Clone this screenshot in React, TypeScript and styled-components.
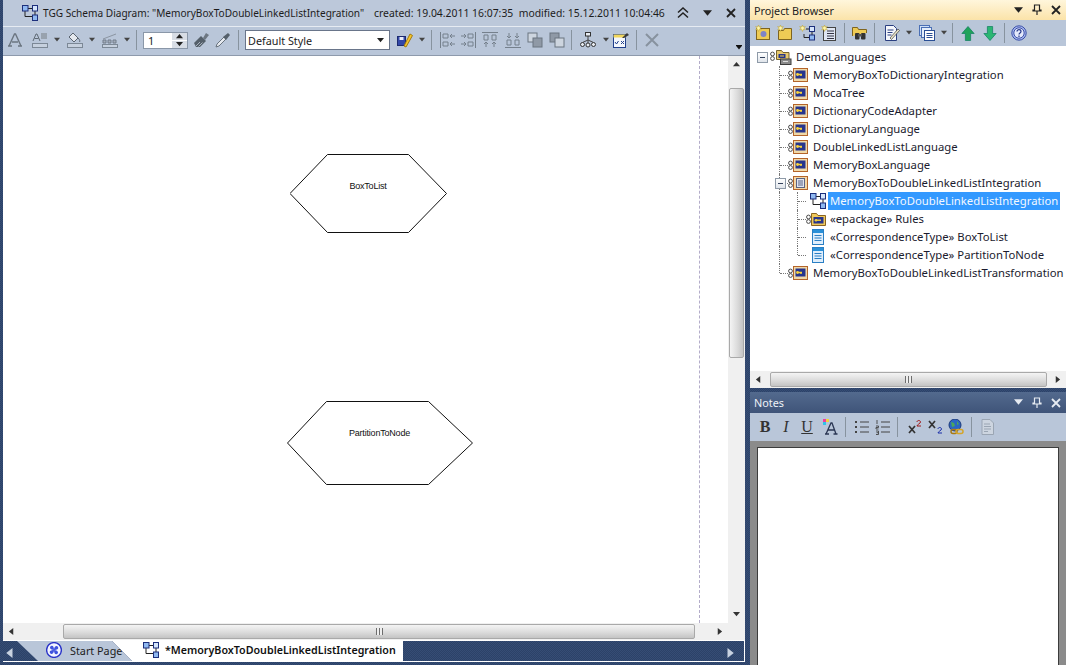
import React from "react";
import styled, { createGlobalStyle } from "styled-components";

const GlobalStyle = createGlobalStyle`
  html, body {
    margin: 0;
    padding: 0;
    background: #2f466d;
    overflow: hidden;
  }
  * { box-sizing: border-box; }
`;

const uiFont = `"Noto Sans", "DejaVu Sans", sans-serif`;
const navyDither = `repeating-conic-gradient(#2c4268 0 25%, #364d75 0 50%) 0 0 / 2px 2px`;

const Shell = styled.div`
  display: flex;
  gap: 4px;
  width: 1066px;
  height: 665px;
  background: ${navyDither};
  font-family: ${uiFont};
  font-size: 11.3px;
  color: #1c1c1c;
`;

const LeftPane = styled.div`
  width: 746px;
  height: 100%;
  padding: 0 1px 3px 3px;
  display: flex;
  flex-direction: column;
`;

const TitleBar = styled.div`
  height: 27px;
  flex: none;
  display: flex;
  align-items: center;
  padding-left: 19px;
  background: #bcc8da;
  border-bottom: 1px solid #e6ebf2;
  white-space: nowrap;
  font-size: 10.1px;
`;

const TitleIcon = styled.span`
  display: flex;
  flex: none;
  margin-right: 5px;
`;

const TitleText = styled.span`
  width: 331px;
  flex: none;
`;

const TitleMeta = styled.span`
  width: 303px;
  flex: none;
  font-size: 10.4px;
`;

const TitleButtons = styled.div`
  display: flex;
  align-items: center;
  gap: 14px;
`;

const Toolbar = styled.div`
  flex: none;
  display: flex;
  align-items: center;
  background: #b9c6d9;
  position: relative;
`;

const MainToolbar = styled(Toolbar)`
  height: 29px;
  padding: 0 0 2px 4px;
  border-bottom: 1px solid #8e9aac;
`;

const Overflow = styled.span`
  position: absolute;
  right: 3px;
  bottom: 4px;
  width: 6px;
  height: 6px;
  border-top: 1px solid #111;
  display: flex;
  align-items: flex-end;
`;

const Sep = styled.span<{ $l?: number; $r?: number }>`
  width: 1px;
  height: 20px;
  flex: none;
  background: #87939f;
  margin: 0 ${({ $r }) => ($r ?? 6) - 1}px 0 ${({ $l }) => $l ?? 6}px;
`;

const Tool = styled.span<{ $w?: number; $mr?: number }>`
  width: ${({ $w }) => $w ?? 16}px;
  height: 18px;
  flex: none;
  display: flex;
  align-items: center;
  justify-content: center;
  margin-right: ${({ $mr }) => $mr ?? 0}px;
`;

const Spin = styled.div`
  width: 45px;
  height: 17px;
  flex: none;
  margin-right: 5px;
  background: #fff;
  border: 1px solid #8a97a8;
  display: flex;
  align-items: center;
  justify-content: space-between;
  padding-left: 4px;
  font-size: 11px;
`;

const SpinBtns = styled.div`
  width: 15px;
  height: 100%;
  display: flex;
  flex-direction: column;
  gap: 1px;
  background: #fff;
`;

const SpinBtn = styled.span`
  flex: 1;
  background: #d8dde5;
  display: flex;
  align-items: center;
  justify-content: center;
`;

const Select = styled.div`
  width: 145px;
  height: 20px;
  flex: none;
  margin-right: 7px;
  background: #fff;
  border: 1px solid #69758a;
  display: flex;
  align-items: center;
  justify-content: space-between;
  padding: 0 5px 0 2px;
  font-size: 10.8px;
`;

const CanvasRow = styled.div`
  flex: 1;
  min-height: 0;
  display: flex;
  background: #fff;
`;

const Diagram = styled.div`
  flex: 1;
  position: relative;
  overflow: hidden;
  background: #fff;
`;

const PageBreak = styled.div`
  position: absolute;
  top: 0;
  bottom: 0;
  left: 696px;
  border-left: 1px dashed #b3acc9;
`;

const NodeBox = styled.div<{ $x: number; $y: number; $w: number; $h: number }>`
  position: absolute;
  left: ${({ $x }) => $x}px;
  top: ${({ $y }) => $y}px;
  width: ${({ $w }) => $w}px;
  height: ${({ $h }) => $h}px;
  display: flex;
  align-items: center;
  justify-content: center;
`;

const NodeShape = styled.svg`
  position: absolute;
  inset: 0;
  width: 100%;
  height: 100%;
`;

const NodeLabel = styled.span<{ $lift: number }>`
  position: relative;
  margin-bottom: ${({ $lift }) => $lift}px;
  margin-right: 1px;
  font-family: "Liberation Sans", Arial, sans-serif;
  font-size: 9px;
  letter-spacing: -0.2px;
  color: #111;
`;

const VScroll = styled.div`
  width: 17px;
  flex: none;
  display: flex;
  flex-direction: column;
  background: #f0f0f0;
`;

const ScrollBtn = styled.div`
  flex: none;
  width: 17px;
  height: 17px;
  display: flex;
  align-items: center;
  justify-content: center;
`;

const VThumb = styled.div`
  width: 15px;
  height: 270px;
  margin: 15px 1px 0;
  border: 1px solid #a9a9a9;
  border-radius: 2px;
  background: linear-gradient(90deg, #f4f4f4, #dcdcdc 55%, #c4c4c4);
`;

const VTrack = styled.div`
  flex: 1;
`;

const HScroll = styled.div`
  height: 17px;
  flex: none;
  display: flex;
  align-items: center;
  background: #f0f0f0;
`;

const HThumb = styled.div<{ $w: number; $ml: number }>`
  width: ${({ $w }) => $w}px;
  height: 15px;
  margin-left: ${({ $ml }) => $ml}px;
  border: 1px solid #a9a9a9;
  border-radius: 2px;
  background: linear-gradient(180deg, #f4f4f4, #dcdcdc 55%, #c4c4c4);
  display: flex;
  align-items: center;
  justify-content: center;
`;

const Grip = styled.span`
  width: 7px;
  height: 7px;
  background: repeating-linear-gradient(90deg, #6d6d6d 0 1px, #eee 1px 3px);
`;

const Spacer = styled.div`
  flex: 1;
`;

const TabStrip = styled.div`
  height: 22px;
  flex: none;
  position: relative;
  display: flex;
  align-items: stretch;
  padding-left: 14px;
  border-top: 1px solid #fff;
  border-right: 1px solid #fff;
  border-bottom: 1px solid #fff;
  background: ${navyDither};
`;

const StartTab = styled.div`
  width: 115px;
  flex: none;
  position: relative;
  z-index: 1;
  clip-path: polygon(0 0, 95px 0, 100% 100%, 21px 100%);
  background: #b9c6d9;
  display: flex;
  align-items: center;
  padding: 0 0 2px 29px;
  gap: 8px;
  font-size: 10.8px;
`;

const ActiveTab = styled.div`
  width: 291px;
  flex: none;
  margin-left: -20px;
  clip-path: polygon(0 0, 100% 0, 100% 100%, 20px 100%);
  background: #fff;
  display: flex;
  align-items: center;
  padding: 0 0 2px 31px;
  gap: 6px;
  font-size: 10.7px;
  font-weight: 600;
  color: #111;
  white-space: nowrap;
`;

const TabIcon = styled.span`
  display: flex;
  flex: none;
`;

const TabArrow = styled.span<{ $left?: boolean }>`
  position: absolute;
  top: 5px;
  ${({ $left }) => ($left ? "left: 2px;" : "right: 9px;")}
`;

const RightPane = styled.div`
  width: 316px;
  height: 100%;
  display: flex;
  flex-direction: column;
`;

const BrowserTitle = styled.div`
  height: 20px;
  flex: none;
  display: flex;
  align-items: center;
  padding: 0 5px 0 4px;
  background: linear-gradient(180deg, #fff6dc, #fbe3a9);
  color: #222;
  font-size: 10.8px;
`;

const PaneTitleText = styled.span`
  flex: 1;
`;

const PaneButtons = styled.div`
  display: flex;
  align-items: center;
  gap: 9px;
`;

const NotesTitle = styled(BrowserTitle)`
  height: 21px;
  margin-top: 4px;
  background: linear-gradient(180deg, #536a8e, #3f5479);
  color: #eef2f7;
`;

const BrowserBar = styled(Toolbar)`
  height: 26px;
  padding-left: 5px;
`;

const TreeArea = styled.div`
  flex: none;
  height: 325px;
  background: #fff;
  padding-top: 2px;
  overflow: hidden;
`;

const Row = styled.div`
  height: 18px;
  padding-left: 2px;
  display: flex;
  align-items: center;
  white-space: nowrap;
  color: #1b1b2e;
`;

const Guide = styled.span<{ $line: "none" | "through" | "branch" | "end" }>`
  position: relative;
  width: 18px;
  height: 18px;
  flex: none;
  &::before {
    content: "";
    position: absolute;
    left: 9px;
    top: 0;
    border-left: 1px dotted #777;
    display: ${({ $line }) => ($line === "none" ? "none" : "block")};
    height: ${({ $line }) => ($line === "end" ? "9px" : "18px")};
  }
  &::after {
    content: "";
    position: absolute;
    left: 10px;
    top: 9px;
    width: 8px;
    border-top: 1px dotted #777;
    display: ${({ $line }) => ($line === "branch" || $line === "end" ? "block" : "none")};
  }
`;

const Expander = styled.span`
  position: absolute;
  left: 5px;
  top: 4px;
  width: 11px;
  height: 11px;
  border: 1px solid #8e9aa8;
  background: linear-gradient(180deg, #fff, #dfe4ea);
  z-index: 1;
  &::after {
    content: "";
    position: absolute;
    left: 2px;
    top: 4px;
    width: 5px;
    height: 1px;
    background: #33415c;
  }
`;

const RowIcon = styled.span<{ $w: number; $mr: number }>`
  display: flex;
  justify-content: flex-end;
  width: ${({ $w }) => $w}px;
  margin-right: ${({ $mr }) => $mr}px;
  flex: none;
`;

const RowLabel = styled.span<{ $selected?: boolean }>`
  padding: 0 2px;
  height: 18px;
  line-height: 18px;
  ${({ $selected }) => $selected && "background: #3399ff; color: #f2f8ff;"}
`;

const NotesBar = styled(Toolbar)`
  height: 28px;
  padding-left: 5px;
`;

const FormatLetter = styled.span<{ $i?: boolean; $u?: boolean; $b?: boolean; $mr?: number }>`
  width: 20px;
  flex: none;
  margin-right: ${({ $mr }) => $mr ?? 1}px;
  text-align: center;
  font-family: "Liberation Serif", serif;
  font-size: 16px;
  color: #333;
  font-weight: ${({ $b }) => ($b ? 700 : 400)};
  font-style: ${({ $i }) => ($i ? "italic" : "normal")};
  text-decoration: ${({ $u }) => ($u ? "underline" : "none")};
`;

const NotesBody = styled.div`
  flex: 1;
  min-height: 0;
  background: #8b8b8b;
  padding: 6px 7px 0;
`;

const NotesEditor = styled.div`
  height: 100%;
  background: #fff;
  border: 1px solid #3c3c3c;
  border-bottom: 0;
`;

const Tri = ({ dir = "down", c = "#222", s = 7 }: { dir?: "down" | "up" | "left" | "right"; c?: string; s?: number }) => {
  const pts = { down: "0,1 8,1 4,6", up: "0,6 8,6 4,1", left: "6,0 6,8 1,4", right: "2,0 2,8 7,4" }[dir];
  return (
    <svg width={s} height={s} viewBox="0 0 8 8">
      <polygon points={pts} fill={c} />
    </svg>
  );
};

const Caret = ({ mr }: { mr?: number }) => (
  <Tool $w={9} $mr={mr}>
    <Tri c="#444" s={6} />
  </Tool>
);

const DiagramIcon = () => (
  <svg width="16" height="16" viewBox="0 0 16 16">
    <path d="M6 3.500h4M13 6v4M3 6v5.500h7" fill="none" stroke="#222" />
    <rect x="0.500" y="0.500" width="5.500" height="5.500" fill="#8fb8f0" stroke="#1c2f7c" />
    <rect x="10.500" y="0.500" width="5" height="5.500" fill="#d5e5fb" stroke="#1c2f7c" />
    <rect x="10.500" y="10" width="5" height="5.500" fill="#8fb8f0" stroke="#1c2f7c" />
  </svg>
);

const Chain = () => (
  <>
    <circle cx="2.500" cy="6" r="1.900" fill="#fff" stroke="#4a4a4a" />
    <circle cx="2.500" cy="10.500" r="1.900" fill="#fff" stroke="#4a4a4a" />
  </>
);

const PackageIcon = () => (
  <svg width="20" height="16" viewBox="0 0 20 16">
    <Chain />
    <rect x="5.500" y="1.500" width="14" height="13" fill="#f0d9a8" stroke="#b4642a" />
    <rect x="7.500" y="3.500" width="10" height="8" fill="#27358c" />
    <path d="M9 7.500h5M13 7.500v1.500" stroke="#f6d33c" strokeWidth="1.400" fill="none" />
    <circle cx="9.500" cy="7.500" r="1.400" fill="#f6d33c" />
  </svg>
);

const DocPackageIcon = () => (
  <svg width="20" height="16" viewBox="0 0 20 16">
    <Chain />
    <rect x="5.500" y="1.500" width="14" height="13" fill="#f3d7a6" stroke="#b4642a" />
    <rect x="8.500" y="3.500" width="8" height="9" fill="#dfe4f0" stroke="#5a6282" />
    <path d="M10 6h5M10 8h5M10 10h5" stroke="#5a6282" />
  </svg>
);

const FolderPackageIcon = () => (
  <svg width="20" height="16" viewBox="0 0 20 16">
    <Chain />
    <path d="M5.500 14.500v-12h5l1.500 2h7.500v10z" fill="#efc95c" stroke="#8a6420" />
    <rect x="7.500" y="6" width="10" height="6.500" fill="#27358c" />
    <path d="M10 9.200h5" stroke="#f6d33c" strokeWidth="1.400" />
    <circle cx="10" cy="9.200" r="1.300" fill="#f6d33c" />
  </svg>
);

const RootIcon = () => (
  <svg width="22" height="18" viewBox="0 0 22 18">
    <Chain />
    <path d="M6.500 11.500v-9h5l1.500 2h6v7z" fill="#e7c96d" stroke="#76632d" />
    <rect x="8.500" y="6" width="7" height="4" fill="#27358c" />
    <path d="M10 8h4" stroke="#f6d33c" />
    <rect x="10.500" y="11" width="10.500" height="5.500" fill="#8b8b8b" stroke="#3d3d3d" />
    <path d="M13 13.500h5" stroke="#ddd" />
  </svg>
);

const ClassIcon = () => (
  <svg width="12" height="16" viewBox="0 0 12 16">
    <rect x="0.500" y="0.500" width="11" height="15" fill="#dfeefc" stroke="#2a7fc4" />
    <rect x="1" y="1" width="10" height="3" fill="#2a90d8" />
    <path d="M2.500 6.500h7M2.500 9h7M2.500 11.500h7" stroke="#2a7fc4" />
  </svg>
);

// Toolbar icons: all on a 16px grid, greyed ones use the same stroke colour
const GlyphA = () => (
  <svg width="16" height="16" viewBox="0 0 16 16">
    <path d="M2 14L7.500 2h1L14 14M1 14h4M11 14h4M5 10h6" fill="none" stroke="#6b7580" strokeWidth="1.400" />
  </svg>
);
const FontColor = () => (
  <svg width="16" height="16" viewBox="0 0 16 16">
    <path d="M1 9l3-7h1l3 7M2.500 6.500h4" fill="none" stroke="#5f6a75" />
    <rect x="9" y="1" width="6" height="6" fill="#98a2ae" />
    <rect x="0.500" y="11.500" width="15" height="4" fill="#c6d0de" stroke="#7c8896" />
  </svg>
);
const FillColor = () => (
  <svg width="16" height="16" viewBox="0 0 16 16">
    <path d="M2 5l4-4 5 5-4 4z" fill="#e4e8ee" stroke="#5a6470" />
    <path d="M11 6c2 2 2 3 1.500 4" stroke="#5a6470" fill="none" />
    <rect x="0.500" y="11.500" width="15" height="4" fill="#c6d0de" stroke="#7c8896" />
  </svg>
);
const LineColor = () => (
  <svg width="16" height="16" viewBox="0 0 16 16">
    <path d="M1 7l13-5" stroke="#8b95a2" />
    <path d="M1 8h3v3h-3zM6 8h3v3h-3zM11 8h3v3h-3z" fill="#a3adba" stroke="#727d8b" />
    <rect x="0.500" y="12.500" width="15" height="3" fill="#c6d0de" stroke="#7c8896" />
  </svg>
);
const Brush = () => (
  <svg width="16" height="16" viewBox="0 0 16 16">
    <path d="M10 6l3-5 3 2-4 5z" fill="#6d7782" />
    <path d="M1 11l7-7 5 5-6 6H3z" fill="#55606b" />
    <path d="M3 14l4-4M5.500 14.500l4-4" stroke="#aab4bf" />
  </svg>
);
const Dropper = () => (
  <svg width="16" height="16" viewBox="0 0 16 16">
    <path d="M1 15l1-3 7-7 2 2-7 7z" fill="#e6eaf0" stroke="#69737e" />
    <path d="M8 5l5-4 2 2-4 5z" fill="#55606b" />
  </svg>
);
const SavePen = () => (
  <svg width="16" height="16" viewBox="0 0 16 16">
    <rect x="0.500" y="4.500" width="8" height="9" fill="#3348a8" stroke="#1c2a70" />
    <rect x="2.500" y="5" width="4" height="3" fill="#e8ecf8" />
    <path d="M7 14L13 2l2.500 1.500L9 15z" fill="#f6c52a" stroke="#a17a10" />
  </svg>
);
const Align = ({ kind }: { kind: number }) => {
  const paths = [
    "M0.500 0v16M3 2h5v4h-5zM3 10h5v4h-5zM15 4h-5M12 2l-2 2 2 2M15 12h-5M12 10l-2 2 2 2",
    "M15.500 0v16M8 2h5v4h-5zM8 10h5v4h-5zM1 4h5M4 2l2 2-2 2M1 12h5M4 10l2 2-2 2",
    "M0 0.500h16M2 3h4v5h-4zM10 3h4v5h-4zM4 15v-5M2 12l2-2 2 2M12 15v-5M10 12l2-2 2 2",
    "M0 15.500h16M2 8h4v5h-4zM10 8h4v5h-4zM4 1v5M2 4l2 2 2-2M12 1v5M10 4l2 2 2-2",
  ][kind];
  return (
    <svg width="16" height="16" viewBox="0 0 16 16">
      <path d={paths} fill="none" stroke="#75808c" />
    </svg>
  );
};
const Stack = ({ front }: { front?: boolean }) => (
  <svg width="16" height="16" viewBox="0 0 16 16">
    <rect x="1" y="1" width="9" height="9" fill={front ? "#8f99a6" : "#cdd5df"} stroke="#6a7480" />
    <rect x="6" y="6" width="9" height="9" fill={front ? "#cdd5df" : "#8f99a6"} stroke="#6a7480" />
  </svg>
);
const LayoutTree = () => (
  <svg width="16" height="16" viewBox="0 0 16 16">
    <path d="M5.500 3h5M8 4v4M2.500 10.500L8 8l5.500 2.500M8 8v3" fill="none" stroke="#444" />
    <rect x="5.500" y="0.500" width="5" height="3.500" fill="#e8ecf2" stroke="#333" />
    <circle cx="2.500" cy="12.500" r="2" fill="#e8ecf2" stroke="#333" />
    <circle cx="8" cy="13" r="2" fill="#e8ecf2" stroke="#333" />
    <circle cx="13.500" cy="12.500" r="2" fill="#e8ecf2" stroke="#333" />
  </svg>
);
const CheckSheet = () => (
  <svg width="16" height="16" viewBox="0 0 16 16">
    <rect x="0.500" y="2.500" width="12" height="13" fill="#f4f7fc" stroke="#21408c" />
    <rect x="0.500" y="2.500" width="12" height="3" fill="#f1d65c" />
    <path d="M2 10l1.500 2 2-3M8 9l3 3M11 9l-3 3" stroke="#21408c" fill="none" />
    <path d="M9 6l5-5 2 2-5 3z" fill="#3a3a3a" />
  </svg>
);
const CrossGrey = () => (
  <svg width="16" height="16" viewBox="0 0 16 16">
    <path d="M2 2l12 12M14 2L2 14" stroke="#87929f" strokeWidth="2" />
  </svg>
);

const Sparkle = () => (
  <path d="M3.500 0l.8 2 2-.5-1.200 1.700 1.200 1.600-2-.4-.8 2-.8-2-2 .4 1.200-1.600L.7 1.500l2 .5z" fill="#fff6a8" stroke="#b89a2a" strokeWidth=".5" />
);
const NewPackage = () => (
  <svg width="16" height="16" viewBox="0 0 16 16">
    <rect x="1.500" y="3.500" width="13" height="11" fill="#eecb55" stroke="#7e6420" />
    <circle cx="8.500" cy="9" r="3" fill="#7f84c7" />
    <Sparkle />
  </svg>
);
const NewFolder = () => (
  <svg width="16" height="16" viewBox="0 0 16 16">
    <path d="M1.500 14.500v-9h5l1-2h7v11z" fill="#eecb55" stroke="#7e6420" />
    <Sparkle />
  </svg>
);
const NewDiagram = () => (
  <svg width="16" height="16" viewBox="0 0 16 16">
    <path d="M7 4h4M13 6v4M5 9v3.500h5" fill="none" stroke="#222" />
    <rect x="10.500" y="1.500" width="5" height="5" fill="#d5e5fb" stroke="#1c2f7c" />
    <rect x="10.500" y="10" width="5" height="5" fill="#8fb8f0" stroke="#1c2f7c" />
    <Sparkle />
  </svg>
);
const NewElement = () => (
  <svg width="16" height="16" viewBox="0 0 16 16">
    <rect x="2.500" y="2.500" width="12" height="13" fill="#dfe6f3" stroke="#444" />
    <path d="M6 6h7M6 8.500h7M6 11h7M6 13.500h7" stroke="#334" />
    <Sparkle />
  </svg>
);
const FindFolder = () => (
  <svg width="16" height="16" viewBox="0 0 16 16">
    <path d="M.5 11V2.500h5l1 2h8V8" fill="#eecb55" stroke="#7e6420" />
    <rect x="3" y="8" width="4.500" height="6.500" rx="1" fill="#333" />
    <rect x="9" y="8" width="4.500" height="6.500" rx="1" fill="#333" />
    <rect x="6" y="9" width="4" height="2.500" fill="#555" />
  </svg>
);
const EditDoc = () => (
  <svg width="16" height="16" viewBox="0 0 16 16">
    <path d="M1.500.5h8l3 3v12h-11z" fill="#f5f7fc" stroke="#2a3f80" />
    <path d="M3.500 5h6M3.500 7.500h5M3.500 10h4" stroke="#2a3f80" />
    <path d="M6 13l8-9 1.500 1.500-8 9z" fill="#e8e2c8" stroke="#444" strokeWidth=".7" />
  </svg>
);
const Windows = () => (
  <svg width="16" height="16" viewBox="0 0 16 16">
    <rect x="0.500" y="0.500" width="10" height="10" fill="#cfe0f7" stroke="#4a6fb5" />
    <rect x="2.500" y="2.500" width="10" height="10" fill="#e4eefb" stroke="#4a6fb5" />
    <rect x="5.500" y="5.500" width="10" height="10" fill="#fff" stroke="#2a4f95" />
    <path d="M7.500 8.500h6M7.500 10.500h6M7.500 12.500h6" stroke="#2a4f95" />
  </svg>
);
const Arrow = ({ down }: { down?: boolean }) => (
  <svg width="14" height="17" viewBox="0 0 16 18">
    <path
      d={down ? "M5 1h6v8h4l-7 8-7-8h4z" : "M8 1l7 8h-4v8H5V9H1z"}
      fill={down ? "#2bb673" : "#1fa35a"}
      stroke="#0f7d5e"
      strokeWidth=".8"
    />
  </svg>
);
const Help = () => (
  <svg width="16" height="16" viewBox="0 0 16 16">
    <circle cx="8" cy="8" r="7.200" fill="#a8b8ee" stroke="#3a4fa8" />
    <circle cx="8" cy="8" r="5.200" fill="#e4e9fb" stroke="#3a4fa8" />
    <path d="M6 6.500c0-2.500 4-2.500 4 0 0 1.500-2 1.500-2 3M8 10.500v1.500" fill="none" stroke="#26388a" strokeWidth="1.200" />
  </svg>
);
const Pin = ({ c }: { c: string }) => (
  <svg width="10" height="12" viewBox="0 0 10 12">
    <path d="M2.500 1h5v5h1.500v1H1V6h1.500zM5 7v4" fill="none" stroke={c} strokeWidth="1.200" />
  </svg>
);
const Close = ({ c }: { c: string }) => (
  <svg width="10" height="10" viewBox="0 0 10 10">
    <path d="M1 1l8 8M9 1L1 9" stroke={c} strokeWidth="1.800" />
  </svg>
);
const CollapseUp = () => (
  <svg width="12" height="12" viewBox="0 0 12 12">
    <path d="M1 5.500L6 1l5 4.500M1 10.500L6 6l5 4.500" fill="none" stroke="#222" strokeWidth="1.500" />
  </svg>
);
const ColorA = () => (
  <svg width="16" height="16" viewBox="0 0 16 16">
    <rect x="1" y="0" width="3" height="3" fill="#ef3fa0" />
    <rect x="4" y="0" width="3" height="3" fill="#f0d63a" />
    <rect x="1" y="3" width="3" height="3" fill="#2fc4e8" />
    <path d="M4 15L9 4h1l4 11M3 15h4M11.500 15h4M6 11h6" fill="none" stroke="#2b3754" strokeWidth="1.300" />
  </svg>
);
const BulletList = () => (
  <svg width="16" height="16" viewBox="0 0 16 16">
    <path d="M6 3h9M6 8h9M6 13h9" stroke="#444" />
    <path d="M1 2h2v2H1zM1 7h2v2H1zM1 12h2v2H1z" fill="#444" />
  </svg>
);
const NumberList = () => (
  <svg width="16" height="16" viewBox="0 0 16 16">
    <path d="M6 3h9M6 8h9M6 13h9" stroke="#444" />
    <path d="M2 1v4M1 7h2.500v1.500H1V10h2.500M1 12h2.500v3.500H1M1.500 13.700h2" fill="none" stroke="#444" strokeWidth=".9" />
  </svg>
);
const Sup = () => (
  <svg width="16" height="16" viewBox="0 0 16 16">
    <path d="M2 7l6 7M8 7l-6 7" stroke="#333" strokeWidth="1.700" />
    <path d="M10 3c0-2 3.500-2 3.500 0 0 1.500-3.500 2.500-3.500 4h4" fill="none" stroke="#a01818" />
  </svg>
);
const Sub = () => (
  <svg width="16" height="16" viewBox="0 0 16 16">
    <path d="M1 2l6 7M7 2L1 9" stroke="#333" strokeWidth="1.700" />
    <path d="M10 10c0-2 3.500-2 3.500 0 0 1.500-3.500 2.500-3.500 4h4" fill="none" stroke="#1a2ea8" />
  </svg>
);
const GlobeLink = () => (
  <svg width="16" height="16" viewBox="0 0 16 16">
    <circle cx="7" cy="6" r="6" fill="#2a66c4" stroke="#1c3a7c" />
    <path d="M3 3l3 1 1 3-3 1zM9 2l2 3-2 1z" fill="#4aa85a" />
    <rect x="3" y="10.500" width="6" height="4" rx="2" fill="none" stroke="#a87a14" strokeWidth="1.500" />
    <rect x="8" y="10.500" width="7" height="4" rx="2" fill="none" stroke="#d4a52a" strokeWidth="1.500" />
  </svg>
);
const GreyDoc = () => (
  <svg width="14" height="16" viewBox="0 0 14 16">
    <path d="M1 .5h8l3.500 3.500v11.500H1z" fill="#cdd5e0" stroke="#9aa5b3" />
    <path d="M3 5h6M3 7.500h7M3 10h7M3 12.500h4" stroke="#9aa5b3" />
  </svg>
);
const StartIcon = () => (
  <svg width="16" height="16" viewBox="0 0 16 16">
    <circle cx="8" cy="8" r="7.400" fill="#f2f4ff" stroke="#2a33c8" strokeWidth="1.400" />
    <path d="M8 8C4 8 3 5 5 4s3 1 3 4c0-4 3-5 4-3s-1 3-4 3c4 0 5 3 3 4s-3-1-3-4c0 4-3 5-4 3s1-3 4-3z" fill="#3f52de" />
  </svg>
);

type Line = "none" | "through" | "branch" | "end";

const treeRows: {
  guides: Line[];
  expand?: boolean;
  icon: React.ReactNode;
  w: number;
  mr: number;
  label: string;
  selected?: boolean;
}[] = [
  { guides: ["none"], expand: true, icon: <RootIcon />, w: 22, mr: 2, label: "DemoLanguages" },
  { guides: ["none", "branch"], icon: <PackageIcon />, w: 20, mr: 3, label: "MemoryBoxToDictionaryIntegration" },
  { guides: ["none", "branch"], icon: <PackageIcon />, w: 20, mr: 3, label: "MocaTree" },
  { guides: ["none", "branch"], icon: <PackageIcon />, w: 20, mr: 3, label: "DictionaryCodeAdapter" },
  { guides: ["none", "branch"], icon: <PackageIcon />, w: 20, mr: 3, label: "DictionaryLanguage" },
  { guides: ["none", "branch"], icon: <PackageIcon />, w: 20, mr: 3, label: "DoubleLinkedListLanguage" },
  { guides: ["none", "branch"], icon: <PackageIcon />, w: 20, mr: 3, label: "MemoryBoxLanguage" },
  { guides: ["none", "branch"], expand: true, icon: <DocPackageIcon />, w: 20, mr: 3, label: "MemoryBoxToDoubleLinkedListIntegration" },
  { guides: ["none", "through", "branch"], icon: <DiagramIcon />, w: 20, mr: 2, label: "MemoryBoxToDoubleLinkedListIntegration", selected: true },
  { guides: ["none", "through", "branch"], icon: <FolderPackageIcon />, w: 20, mr: 2, label: "«epackage» Rules" },
  { guides: ["none", "through", "branch"], icon: <ClassIcon />, w: 18, mr: 4, label: "«CorrespondenceType» BoxToList" },
  { guides: ["none", "through", "end"], icon: <ClassIcon />, w: 18, mr: 4, label: "«CorrespondenceType» PartitionToNode" },
  { guides: ["none", "end"], icon: <PackageIcon />, w: 20, mr: 3, label: "MemoryBoxToDoubleLinkedListTransformation" },
];

export default function App() {
  return (
    <Shell>
      <GlobalStyle />
      <LeftPane>
        <TitleBar>
          <TitleIcon><DiagramIcon /></TitleIcon>
          <TitleText>TGG Schema Diagram: "MemoryBoxToDoubleLinkedListIntegration"</TitleText>
          <TitleMeta>created: 19.04.2011 16:07:35&nbsp; modified: 15.12.2011 10:04:46</TitleMeta>
          <TitleButtons>
            <CollapseUp />
            <Tri s={9} />
            <Close c="#222" />
          </TitleButtons>
        </TitleBar>

        <MainToolbar>
          <Tool $mr={9}><GlyphA /></Tool>
          <Tool $mr={4}><FontColor /></Tool>
          <Caret mr={6} />
          <Tool $mr={4}><FillColor /></Tool>
          <Caret mr={6} />
          <Tool $mr={4}><LineColor /></Tool>
          <Caret />
          <Sep $l={5} $r={7} />
          <Spin>
            1
            <SpinBtns>
              <SpinBtn><Tri dir="up" s={7} /></SpinBtn>
              <SpinBtn><Tri s={7} /></SpinBtn>
            </SpinBtns>
          </Spin>
          <Tool $mr={6}><Brush /></Tool>
          <Tool><Dropper /></Tool>
          <Sep $l={7} $r={7} />
          <Select>
            Default Style
            <Tri />
          </Select>
          <Tool $mr={4}><SavePen /></Tool>
          <Caret />
          <Sep $l={5} $r={9} />
          <Tool $mr={4}><Align kind={0} /></Tool>
          <Tool $mr={6}><Align kind={1} /></Tool>
          <Tool $mr={7}><Align kind={2} /></Tool>
          <Tool $mr={6}><Align kind={3} /></Tool>
          <Tool $mr={6}><Stack /></Tool>
          <Tool><Stack front /></Tool>
          <Sep $l={6} $r={9} />
          <Tool $mr={5}><LayoutTree /></Tool>
          <Caret mr={3} />
          <Tool><CheckSheet /></Tool>
          <Sep $l={7} $r={8} />
          <Tool><CrossGrey /></Tool>
          <Overflow><Tri c="#111" s={6} /></Overflow>
        </MainToolbar>

        <CanvasRow>
          <Diagram>
            <PageBreak />
            <NodeBox $x={287} $y={98} $w={157} $h={79}>
              <NodeShape viewBox="0 0 157 79">
                <polygon points="0,39.500 37.500,0.500 118.500,0.500 156.500,39.500 118.500,78.500 37.500,78.500" fill="#fff" stroke="#111" />
              </NodeShape>
              <NodeLabel $lift={16}>BoxToList</NodeLabel>
            </NodeBox>
            <NodeBox $x={284} $y={345} $w={186} $h={84}>
              <NodeShape viewBox="0 0 186 84">
                <polygon points="0.500,42 39.500,0.500 141.500,0.500 185.500,42 141.500,83.500 39.500,83.500" fill="#fff" stroke="#111" />
              </NodeShape>
              <NodeLabel $lift={21}>PartitionToNode</NodeLabel>
            </NodeBox>
          </Diagram>
          <VScroll>
            <ScrollBtn><Tri dir="up" c="#333" /></ScrollBtn>
            <VThumb />
            <VTrack />
            <ScrollBtn><Tri c="#333" /></ScrollBtn>
          </VScroll>
        </CanvasRow>

        <HScroll>
          <ScrollBtn><Tri dir="left" c="#333" /></ScrollBtn>
          <HThumb $w={632} $ml={43}><Grip /></HThumb>
          <Spacer />
          <ScrollBtn><Tri dir="right" c="#333" /></ScrollBtn>
          <ScrollBtn />
        </HScroll>

        <TabStrip>
          <TabArrow $left><Tri dir="left" c="#c8d2e0" s={10} /></TabArrow>
          <StartTab>
            <TabIcon><StartIcon /></TabIcon>
            Start Page
          </StartTab>
          <ActiveTab>
            <TabIcon><DiagramIcon /></TabIcon>
            *MemoryBoxToDoubleLinkedListIntegration
          </ActiveTab>
          <TabArrow><Tri dir="right" c="#c8d2e0" s={10} /></TabArrow>
        </TabStrip>
      </LeftPane>

      <RightPane>
        <BrowserTitle>
          <PaneTitleText>Project Browser</PaneTitleText>
          <PaneButtons>
            <Tri s={9} />
            <Pin c="#222" />
            <Close c="#222" />
          </PaneButtons>
        </BrowserTitle>
        <BrowserBar>
          <Tool $mr={6}><NewPackage /></Tool>
          <Tool $mr={6}><NewFolder /></Tool>
          <Tool $mr={6}><NewDiagram /></Tool>
          <Tool><NewElement /></Tool>
          <Sep $l={7} $r={8} />
          <Tool><FindFolder /></Tool>
          <Sep $l={6} $r={10} />
          <Tool $mr={4}><EditDoc /></Tool>
          <Caret mr={6} />
          <Tool $mr={4}><Windows /></Tool>
          <Caret />
          <Sep $l={4} $r={8} />
          <Tool $mr={6}><Arrow /></Tool>
          <Tool><Arrow down /></Tool>
          <Sep $l={6} $r={7} />
          <Tool><Help /></Tool>
        </BrowserBar>
        <TreeArea>
          {treeRows.map((r) => (
            <Row key={r.label + r.guides.length}>
              {r.guides.map((g, j) => (
                <Guide key={j} $line={g}>
                  {r.expand && j === r.guides.length - 1 && <Expander />}
                </Guide>
              ))}
              <RowIcon $w={r.w} $mr={r.mr}>{r.icon}</RowIcon>
              <RowLabel $selected={r.selected}>{r.label}</RowLabel>
            </Row>
          ))}
        </TreeArea>
        <HScroll>
          <ScrollBtn><Tri dir="left" c="#333" /></ScrollBtn>
          <HThumb $w={277} $ml={3}><Grip /></HThumb>
          <Spacer />
          <ScrollBtn><Tri dir="right" c="#333" /></ScrollBtn>
        </HScroll>
        <NotesTitle>
          <PaneTitleText>Notes</PaneTitleText>
          <PaneButtons>
            <Tri c="#e6ebf2" s={9} />
            <Pin c="#e6ebf2" />
            <Close c="#e6ebf2" />
          </PaneButtons>
        </NotesTitle>
        <NotesBar>
          <FormatLetter $b>B</FormatLetter>
          <FormatLetter $i>I</FormatLetter>
          <FormatLetter $u $mr={5}>U</FormatLetter>
          <Tool><ColorA /></Tool>
          <Sep $l={7} $r={9} />
          <Tool $mr={5}><BulletList /></Tool>
          <Tool><NumberList /></Tool>
          <Sep $l={6} $r={10} />
          <Tool $mr={5}><Sup /></Tool>
          <Tool $mr={4}><Sub /></Tool>
          <Tool><GlobeLink /></Tool>
          <Sep $l={7} $r={9} />
          <Tool><GreyDoc /></Tool>
        </NotesBar>
        <NotesBody>
          <NotesEditor />
        </NotesBody>
      </RightPane>
    </Shell>
  );
}
